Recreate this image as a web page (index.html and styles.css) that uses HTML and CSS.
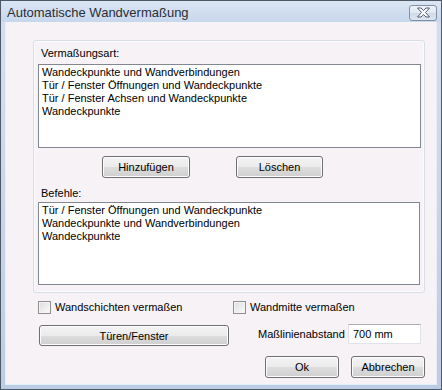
FILE: index.html
```html
<!DOCTYPE html>
<html lang="de">
<head>
    <meta charset="UTF-8">
    <meta name="viewport" content="width=device-width, initial-scale=1.0">
    <title>Automatische Wandvermaßung</title>
    <link rel="stylesheet" href="styles.css">
</head>
<body>
    <div class="window">
        <div class="titlebar">
            <span class="title">Automatische Wandvermaßung</span>
            <div class="close-btn">
                <svg width="17" height="11" viewBox="0 0 17 11">
                    <path d="M2.5 1 H6 L8.5 3.5 L11 1 H14.5 L10.5 5.5 L14.5 10 H11 L8.5 7.5 L6 10 H2.5 L6.5 5.5 Z" fill="#fff" stroke="#535d6c" stroke-width="1" stroke-linejoin="round"/>
                </svg>
            </div>
        </div>

        <div class="client">
            <div class="group">
                <div class="label first">Vermaßungsart:</div>
                <div class="listbox list-types">
                    <div class="item">Wandeckpunkte und Wandverbindungen</div>
                    <div class="item">Tür / Fenster Öffnungen und Wandeckpunkte</div>
                    <div class="item">Tür / Fenster Achsen und Wandeckpunkte</div>
                    <div class="item">Wandeckpunkte</div>
                </div>

                <div class="button-row">
                    <button class="btn btn-add">Hinzufügen</button>
                    <button class="btn btn-delete">Löschen</button>
                </div>

                <div class="label second">Befehle:</div>
                <div class="listbox list-commands">
                    <div class="item">Tür / Fenster Öffnungen und Wandeckpunkte</div>
                    <div class="item">Wandeckpunkte und Wandverbindungen</div>
                    <div class="item">Wandeckpunkte</div>
                </div>
            </div>

            <div class="check-row">
                <label class="check first-check"><span class="box"></span>Wandschichten vermaßen</label>
                <label class="check"><span class="box"></span>Wandmitte vermaßen</label>
            </div>

            <div class="option-row">
                <button class="btn btn-doors">Türen/Fenster</button>
                <span class="distance-label">Maßlinienabstand</span>
                <div class="input">700 mm</div>
            </div>

            <div class="footer-row">
                <button class="btn btn-footer">Ok</button>
                <button class="btn btn-footer">Abbrechen</button>
            </div>
        </div>
    </div>
</body>
</html>
```

FILE: styles.css
```css
body {
    margin: 0;
    padding: 0;
    font-family: "Liberation Sans", Arial, sans-serif;
    font-size: 11px;
    color: #000;
    background: #fff;
}
.window {
    width: 442px;
    height: 390px;
    box-sizing: border-box;
    border: 1px solid #4e5866;
    background: linear-gradient(to bottom, #d3e0f0, #bccde3);
    padding: 0 4px 4px 4px;
    display: flex;
    flex-direction: column;
}
.titlebar {
    height: 21px;
    display: flex;
    align-items: center;
    justify-content: space-between;
    background: linear-gradient(to bottom, #dbe6f4, #c7d7ec);
    margin: 0 -4px;
    padding: 0 4px 0 6px;
}
.title {
    font-size: 13px;
    color: #2a2e36;
    padding-top: 1px;
}
.close-btn {
    width: 26px;
    height: 14px;
    margin-top: 2px;
    border: 1px solid #8390a3;
    border-radius: 3px;
    background: linear-gradient(to bottom, #eef2f8 0%, #e0e7f1 50%, #cfd9e7 51%, #dde5f0 100%);
    display: flex;
    align-items: center;
    justify-content: center;
}
.client {
    flex: 1;
    background: #f6f2f6;
    border: 1px solid #e6edf5;
    border-top: none;
    display: flex;
    flex-direction: column;
}
.group {
    width: 392px;
    box-sizing: border-box;
    margin: 18px 0 0 27px;
    border: 1px solid #d8dee4;
    border-radius: 3px;
    box-shadow: inset 0 0 0 1px #fbfafc;
    padding: 6px 3px 7px 4px;
    display: flex;
    flex-direction: column;
}
.label {
    line-height: 13px;
    padding-left: 3px;
}
.label.second {
    margin-top: 9px;
}
.listbox {
    background: #fff;
    border: 1px solid #828790;
    padding: 1px 3px;
    box-sizing: border-box;
}
.list-types {
    height: 84px;
    margin-top: 4px;
}
.list-commands {
    height: 83px;
    margin-top: 2px;
    margin-right: 1px;
}
.item {
    line-height: 13px;
    white-space: nowrap;
}
.button-row {
    display: flex;
    gap: 46px;
    margin-top: 8px;
    padding-left: 64px;
}
.btn {
    font-family: "Liberation Sans", Arial, sans-serif;
    font-size: 11px;
    color: #000;
    border: 1px solid #707070;
    border-radius: 3px;
    background: linear-gradient(to bottom, #f3f3f3 0%, #ebebeb 50%, #dddddd 51%, #cfcfcf 100%);
    box-shadow: inset 0 0 0 1px #fcfcfc;
    padding: 0;
    height: 22px;
}
.btn-add {
    width: 88px;
}
.btn-delete {
    width: 87px;
}
.check-row {
    display: flex;
    margin-top: 8px;
    padding-left: 32px;
}
.check {
    display: flex;
    align-items: center;
    gap: 4px;
    line-height: 13px;
}
.first-check {
    width: 195px;
}
.box {
    width: 13px;
    height: 13px;
    box-sizing: border-box;
    border: 1px solid #8f8f8f;
    background: linear-gradient(135deg, #dcdcdc, #fbfbfb);
    box-shadow: inset 0 0 0 1px #f4f4f4;
}
.option-row {
    display: flex;
    align-items: flex-start;
    margin-top: 10px;
    padding-left: 33px;
}
.btn-doors {
    width: 190px;
    height: 21px;
    margin-top: 1px;
}
.distance-label {
    width: 90px;
    margin-left: 29px;
    line-height: 20px;
}
.input {
    width: 73px;
    height: 20px;
    box-sizing: border-box;
    background: #fff;
    border: 1px solid #e2e3ea;
    border-top-color: #abadb3;
    padding-left: 4px;
    line-height: 18px;
}
.footer-row {
    display: flex;
    justify-content: flex-end;
    gap: 12px;
    margin-top: 10px;
    padding-right: 11px;
}
.btn-footer {
    width: 74px;
}
```
